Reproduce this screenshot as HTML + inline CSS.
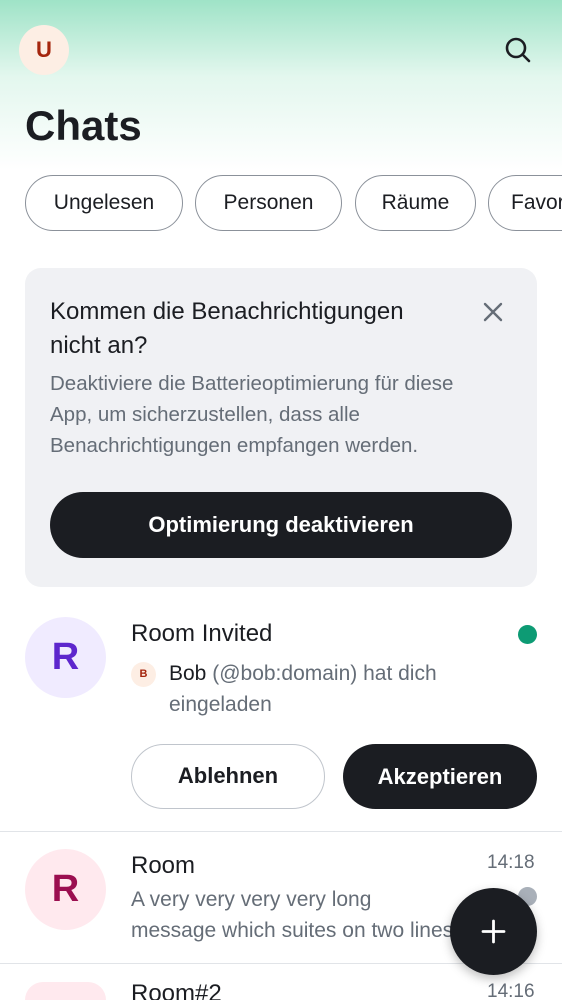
<!DOCTYPE html>
<html><head><meta charset="utf-8"><style>
*{margin:0;padding:0;box-sizing:border-box}
html,body{width:562px;height:1000px;overflow:hidden}
body{font-family:"Liberation Sans",sans-serif;background:#fff;position:relative;color:#1b1d22}
#w{position:absolute;left:0;top:0;width:562px;height:1000px;overflow:hidden}
.grad{position:absolute;left:0;top:0;width:562px;height:170px;background:linear-gradient(#9fe3c7 0%,#e3f7ee 45%,#fff 100%)}
.abs{position:absolute}
.chip{position:absolute;top:175px;height:56px;border:1.5px solid #8b919a;border-radius:28px;background:#fff;font-size:21px;line-height:53px;text-align:center;color:#1b1d22;overflow:hidden;white-space:nowrap}
.av{position:absolute;border-radius:50%;text-align:center;font-weight:bold}
.t{position:absolute;white-space:nowrap}
</style></head><body><div id="w">
<div class="grad"></div>
<div class="av" style="left:19px;top:25px;width:50px;height:50px;background:#fdeee4;color:#a5260e;font-size:22px;line-height:50px">U</div>
<svg class="abs" style="left:503px;top:35px" width="30" height="30" viewBox="0 0 30 30"><circle cx="13" cy="13" r="9" fill="none" stroke="#1b1d22" stroke-width="2.6"/><line x1="19.5" y1="19.5" x2="26" y2="26" stroke="#1b1d22" stroke-width="2.6" stroke-linecap="round"/></svg>
<div class="t" style="left:25px;top:100px;font-size:42px;font-weight:bold;line-height:52px">Chats</div>
<div class="chip" style="left:25px;width:158px">Ungelesen</div>
<div class="chip" style="left:195px;width:147px">Personen</div>
<div class="chip" style="left:355px;width:121px">Räume</div>
<div class="chip" style="left:488px;width:120px;text-align:left;padding-left:22px">Favoriten</div>
<div class="abs" style="left:25px;top:268px;width:512px;height:319px;background:#f0f1f4;border-radius:16px"></div>
<div class="t" style="left:50px;top:295px;font-size:24px;line-height:34px">Kommen die Benachrichtigungen<br>nicht an?</div>
<svg class="abs" style="left:482px;top:301px" width="22" height="22" viewBox="0 0 22 22"><path d="M3 3L19 19M19 3L3 19" stroke="#656d77" stroke-width="2.4" stroke-linecap="round"/></svg>
<div class="t" style="left:50px;top:368px;font-size:20.5px;line-height:31px;color:#656d77">Deaktiviere die Batterieoptimierung für diese<br>App, um sicherzustellen, dass alle<br>Benachrichtigungen empfangen werden.</div>
<div class="abs" style="left:50px;top:492px;width:462px;height:66px;background:#1b1d22;border-radius:33px;color:#fff;font-size:22px;font-weight:bold;text-align:center;line-height:66px">Optimierung deaktivieren</div>
<div class="av" style="left:25px;top:617px;width:81px;height:81px;background:#f0ebff;color:#5d26cd;font-size:38px;line-height:81px">R</div>
<div class="t" style="left:131px;top:619px;font-size:24px;line-height:30px">Room Invited</div>
<div class="abs" style="left:518px;top:625px;width:19px;height:19px;border-radius:50%;background:#0d9b74"></div>
<div class="av" style="left:131px;top:662px;width:25px;height:25px;background:#fdeee4;color:#a5260e;font-size:11px;line-height:25px">B</div>
<div class="t" style="left:169px;top:658px;font-size:21px;line-height:31px;color:#656d77"><span style="color:#1b1d22">Bob</span> (@bob:domain) hat dich<br>eingeladen</div>
<div class="abs" style="left:131px;top:744px;width:194px;height:65px;border:1.5px solid #c0c5cc;border-radius:33px;text-align:center;line-height:62px;font-size:22px;font-weight:bold">Ablehnen</div>
<div class="abs" style="left:343px;top:744px;width:194px;height:65px;background:#1b1d22;border-radius:33px;text-align:center;line-height:65px;font-size:22px;font-weight:bold;color:#fff">Akzeptieren</div>
<div class="abs" style="left:0;top:831px;width:562px;height:1px;background:#e1e4e8"></div>
<div class="av" style="left:25px;top:849px;width:81px;height:81px;background:#ffe9ee;color:#9b0f50;font-size:38px;line-height:81px">R</div>
<div class="t" style="left:131px;top:851px;font-size:24px;line-height:30px">Room</div>
<div class="t" style="left:487px;top:850px;font-size:19px;color:#656d77;line-height:26px">14:18</div>
<div class="abs" style="left:518px;top:887px;width:19px;height:19px;border-radius:50%;background:#a9b0b9"></div>
<div class="t" style="left:131px;top:884px;font-size:21px;line-height:31px;color:#656d77">A very very very very long<br>message which suites on two lines</div>
<div class="abs" style="left:0;top:963px;width:562px;height:1px;background:#e1e4e8"></div>
<div class="av" style="left:25px;top:982px;width:81px;height:18px;border-radius:41px 41px 0 0;background:#ffe9ee"></div>
<div class="t" style="left:131px;top:983px;font-size:24px;line-height:17px;height:17px;overflow:hidden;padding-top:2px">Room#2</div>
<div class="t" style="left:487px;top:983px;font-size:19px;color:#656d77;line-height:17px;height:17px;overflow:hidden">14:16</div>
<div class="abs" style="left:450px;top:888px;width:87px;height:87px;border-radius:50%;background:#1b1d22;box-shadow:0 4px 10px rgba(0,0,0,.25)"></div>
<svg class="abs" style="left:480px;top:918px" width="27" height="27" viewBox="0 0 27 27"><path d="M13.5 3V24M3 13.5H24" stroke="#fff" stroke-width="2.8" stroke-linecap="round"/></svg>
</div></body></html>
